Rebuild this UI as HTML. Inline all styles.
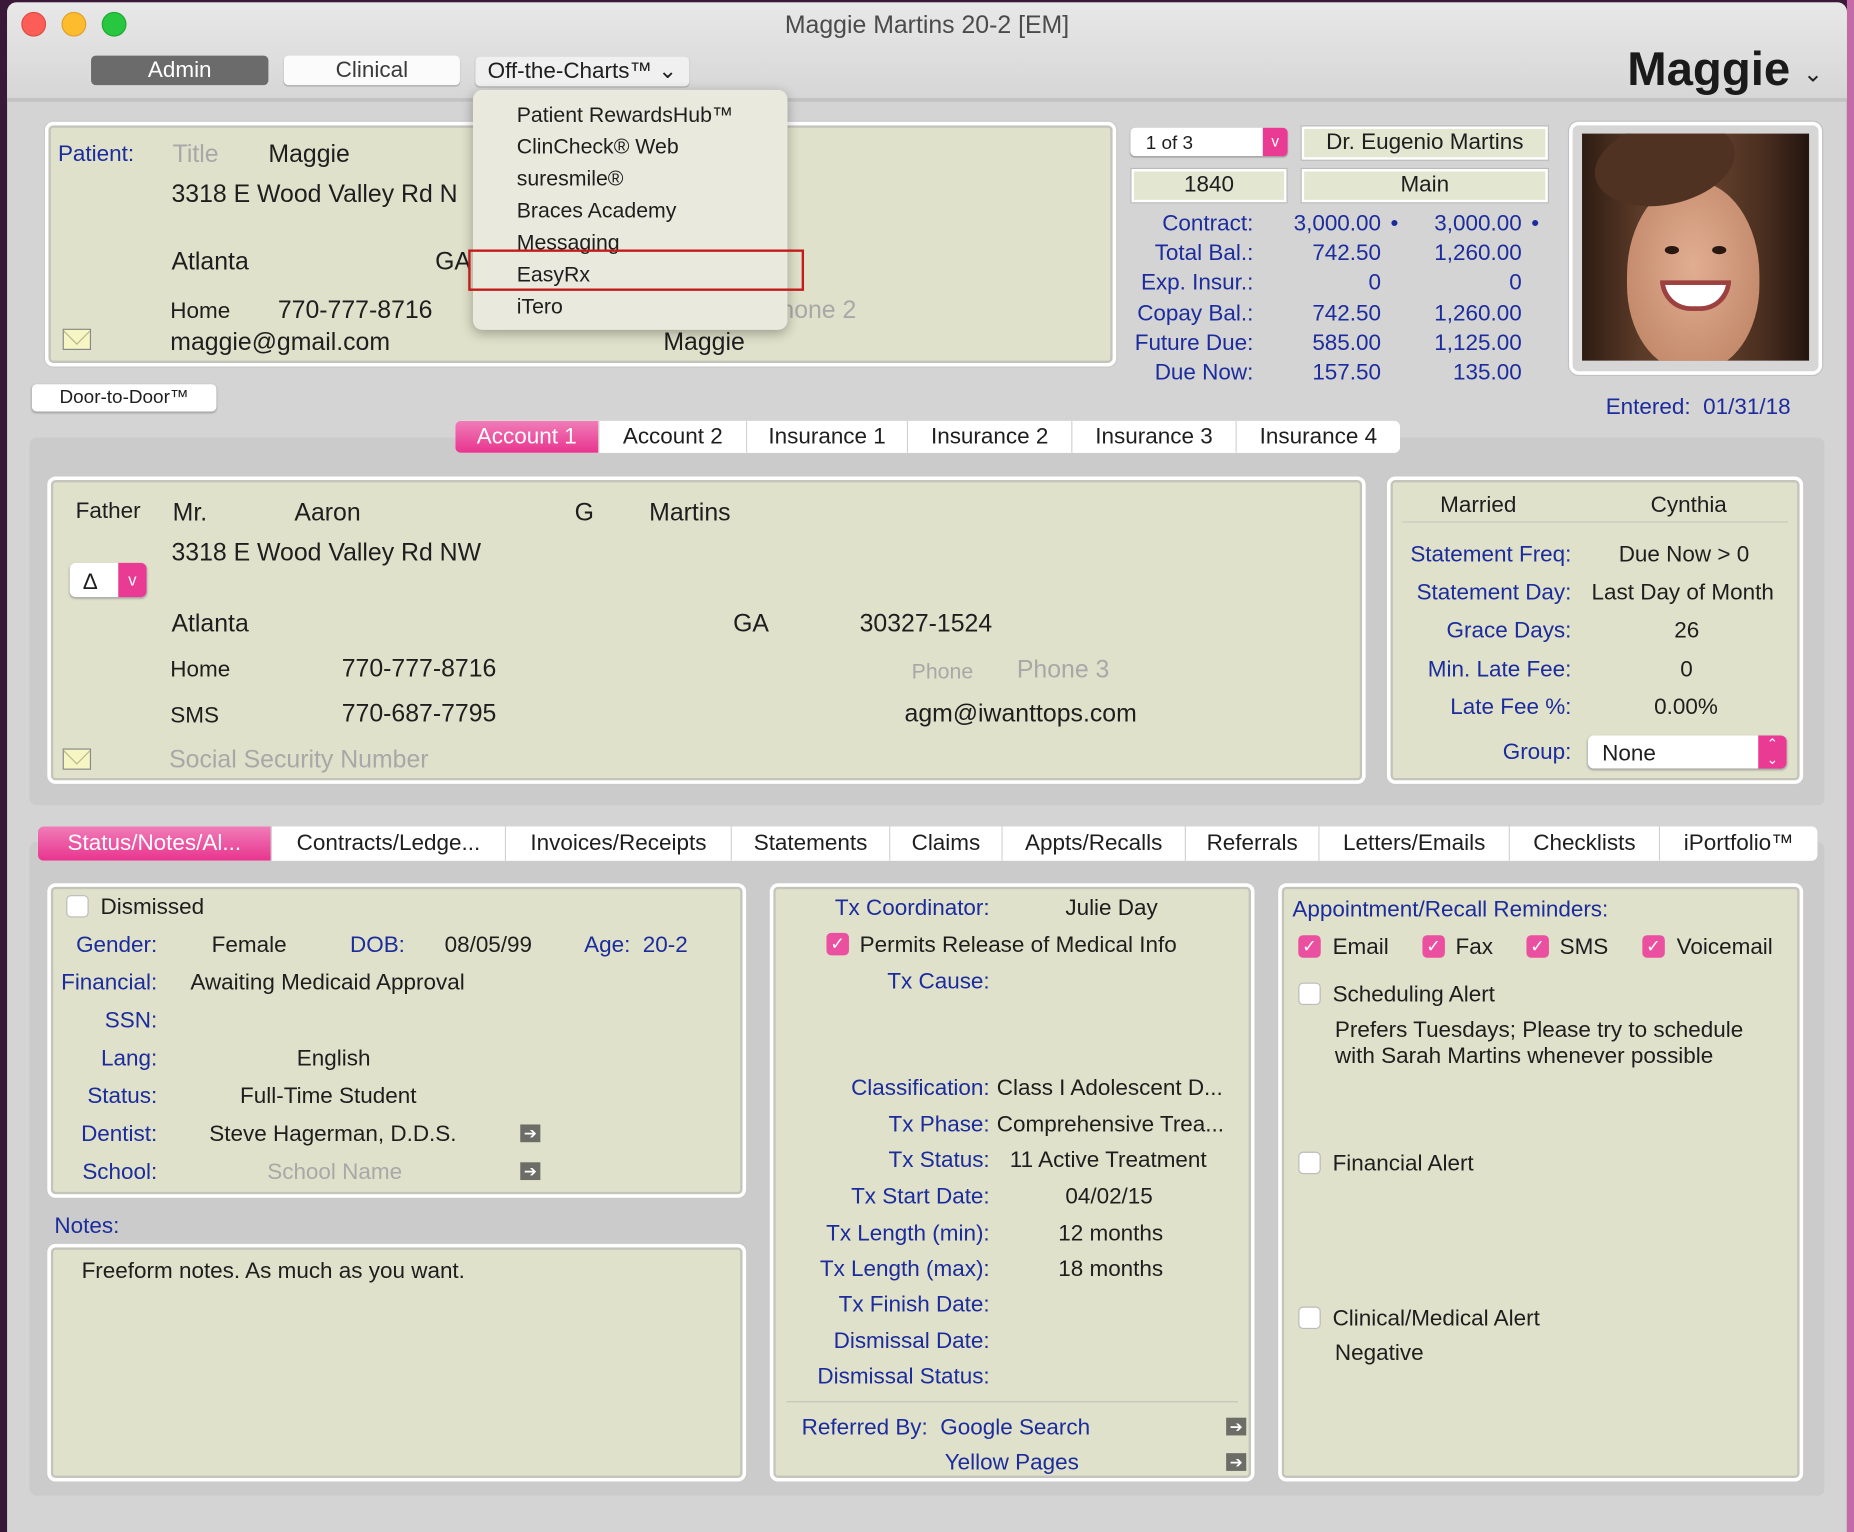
<!DOCTYPE html>
<html><head><meta charset="utf-8"><style>
*{margin:0;padding:0;box-sizing:border-box}
body{width:1854px;height:1532px;overflow:hidden;background:#3a1838;font-family:"Liberation Sans",Arial,sans-serif}
#s{position:absolute;left:0;top:0;width:1568px;height:1296px;transform:scale(1.18240);transform-origin:0 0}
.a{position:absolute}
.t{position:absolute;white-space:nowrap;line-height:1;font-size:19px;color:#1e1e1e;margin-top:1px}
.r{transform:translateX(-100%)}
.c{transform:translateX(-50%)}
.b{color:#1c2c9c}
.g{color:#a8a8a8}
.pn{position:absolute;background:#dfe1ca;border:3px solid #fff;border-radius:7px;box-shadow:inset 0 0 0 2px #c4c4bc,0 0 0 1px #c9c9c9}
.tab{position:absolute;top:0;height:100%;background:#fff;border-right:1px solid #d0d0d0;text-align:center;font-size:19px;color:#1e1e1e;line-height:27px}
.pk{background:linear-gradient(#f07cb8,#e8348e);color:#fff}
.cb{position:absolute;width:19px;height:19px;border-radius:4px;background:#ea4fa0;color:#fff;font-size:15px;line-height:19px;text-align:center}
.ce{position:absolute;width:19px;height:19px;border-radius:4px;background:#fff;border:1px solid #bbb}
.ar{position:absolute;width:17px;height:15px;background:#6d6d68;color:#fff;font-size:13px;line-height:15px;text-align:center}
.env{position:absolute;width:24px;height:18px;background:#f6f5c4;border:1px solid #888;overflow:hidden}
.env:after{content:"";position:absolute;left:2px;top:-9px;width:16px;height:16px;border:1px solid #b8b890;transform:rotate(45deg)}
.bx{position:absolute;background:#e3e6d0;border:2px solid #fff;box-shadow:0 0 0 1px #bbb;text-align:center;font-size:19px;line-height:24px;color:#1e1e1e}
</style></head><body>
<div id="s">
<div class="a" style="left:6px;top:2px;width:1556px;height:1294px;background:#d4d4d4;border-radius:8px 8px 0 0"></div>
<div class="a" style="left:1562px;top:0;width:6px;height:1296px;background:#c46aa6"></div>
<div class="a" style="left:6px;top:2px;width:1556px;height:82px;background:linear-gradient(#e8e8e8,#d6d6d6);border-radius:8px 8px 0 0"></div>
<div class="a" style="left:6px;top:83px;width:1556px;height:3px;background:#c2c2c2"></div>
<div class="a" style="left:18px;top:10px;width:21px;height:21px;border-radius:50%;background:#fc5e57;border:1px solid #dd4a44"></div>
<div class="a" style="left:52px;top:10px;width:21px;height:21px;border-radius:50%;background:#fdbb2e;border:1px solid #dea02a"></div>
<div class="a" style="left:86px;top:10px;width:21px;height:21px;border-radius:50%;background:#27c73f;border:1px solid #1fa731"></div>
<div class="t c" style="left:784px;top:10px;font-size:21px;color:#4b4b4b">Maggie Martins 20-2 [EM]</div>
<div class="a" style="left:77px;top:47px;width:150px;height:25px;background:#6b6b6b;border-radius:4px;color:#fff;font-size:19px;text-align:center;line-height:25px">Admin</div>
<div class="a" style="left:240px;top:47px;width:149px;height:25px;background:#fbfbfb;border-radius:4px;color:#3a3a3a;font-size:19px;text-align:center;line-height:25px;box-shadow:0 1px 1px #aaa">Clinical</div>
<div class="a" style="left:402px;top:48px;width:181px;height:25px;background:#f0f0f0;border-radius:4px;color:#1e1e1e;font-size:19px;text-align:center;line-height:25px;box-shadow:0 1px 1px #aaa">Off-the-Charts™ ⌄</div>
<div class="t r" style="left:1514px;top:38px;font-size:40px;font-weight:bold;color:#1a1a1a">Maggie</div>
<div class="t" style="left:1525px;top:52px;font-size:20px;color:#222">⌄</div>
<div class="pn" style="left:38px;top:103px;width:906px;height:207px"></div>
<div class="t b" style="left:49px;top:120px">Patient:</div>
<div class="t g" style="left:146px;top:119px;font-size:21px">Title</div>
<div class="t" style="left:227px;top:119px;font-size:21px">Maggie</div>
<div class="t" style="left:145px;top:153px;font-size:21px">3318 E Wood Valley Rd N</div>
<div class="t" style="left:145px;top:210px;font-size:21px">Atlanta</div>
<div class="t" style="left:368px;top:210px;font-size:21px">GA</div>
<div class="t" style="left:144px;top:253px">Home</div>
<div class="t" style="left:235px;top:251px;font-size:21px">770-777-8716</div>
<div class="t g" style="left:660px;top:251px;font-size:21px">hone 2</div>
<div class="env" style="left:53px;top:278px"></div>
<div class="t" style="left:144px;top:278px;font-size:21px">maggie@gmail.com</div>
<div class="t" style="left:561px;top:278px;font-size:21px">Maggie</div>
<div class="a" style="left:400px;top:76px;width:266px;height:203px;background:#e9eadd;border-radius:8px;box-shadow:0 3px 10px rgba(0,0,0,.3)"></div>
<div class="t" style="left:437px;top:87px;font-size:18px">Patient RewardsHub™</div>
<div class="t" style="left:437px;top:114px;font-size:18px">ClinCheck® Web</div>
<div class="t" style="left:437px;top:141px;font-size:18px">suresmile®</div>
<div class="t" style="left:437px;top:168px;font-size:18px">Braces Academy</div>
<div class="t" style="left:437px;top:195px;font-size:18px">Messaging</div>
<div class="t" style="left:437px;top:222px;font-size:18px">EasyRx</div>
<div class="t" style="left:437px;top:249px;font-size:18px">iTero</div>
<div class="a" style="left:396px;top:211px;width:284px;height:35px;border:2px solid #c41a1a"></div>
<div class="a" style="left:956px;top:108px;width:133px;height:24px;background:#fff;border-radius:4px;box-shadow:0 1px 1px #999"></div>
<div class="t" style="left:969px;top:113px;font-size:16px">1 of 3</div>
<div class="a" style="left:1068px;top:108px;width:21px;height:24px;background:#ea3b94;border-radius:0 4px 4px 0;color:#fff;font-size:13px;text-align:center;line-height:24px">v</div>
<div class="bx" style="left:1101px;top:107px;width:208px;height:28px">Dr. Eugenio Martins</div>
<div class="bx" style="left:957px;top:143px;width:131px;height:28px">1840</div>
<div class="bx" style="left:1101px;top:143px;width:208px;height:28px">Main</div>
<div class="t b r" style="left:1060px;top:179px">Contract:</div><div class="t b r" style="left:1168px;top:179px">3,000.00</div><div class="t b" style="left:1176px;top:179px">•</div><div class="t b r" style="left:1287px;top:179px">3,000.00</div><div class="t b" style="left:1295px;top:179px">•</div>
<div class="t b r" style="left:1060px;top:204px">Total Bal.:</div><div class="t b r" style="left:1168px;top:204px">742.50</div><div class="t b r" style="left:1287px;top:204px">1,260.00</div>
<div class="t b r" style="left:1060px;top:229px">Exp. Insur.:</div><div class="t b r" style="left:1168px;top:229px">0</div><div class="t b r" style="left:1287px;top:229px">0</div>
<div class="t b r" style="left:1060px;top:255px">Copay Bal.:</div><div class="t b r" style="left:1168px;top:255px">742.50</div><div class="t b r" style="left:1287px;top:255px">1,260.00</div>
<div class="t b r" style="left:1060px;top:280px">Future Due:</div><div class="t b r" style="left:1168px;top:280px">585.00</div><div class="t b r" style="left:1287px;top:280px">1,125.00</div>
<div class="t b r" style="left:1060px;top:305px">Due Now:</div><div class="t b r" style="left:1168px;top:305px">157.50</div><div class="t b r" style="left:1287px;top:305px">135.00</div>
<div class="a" style="left:1327px;top:103px;width:214px;height:214px;background:#d6d6d6;border:3px solid #fff;border-radius:8px;box-shadow:0 0 0 1px #c0c0c0"></div>
<div class="a" style="left:1338px;top:113px;width:192px;height:192px;overflow:hidden;background:linear-gradient(90deg,#2e1c12,#5a3a28 25%,#6b4631 50%,#4a2e1f 80%,#231510)">
<div class="a" style="left:38px;top:40px;width:112px;height:160px;border-radius:50% 50% 45% 45%;background:radial-gradient(ellipse at 50% 45%,#e1ae92,#c48a6c 75%)"></div>
<div class="a" style="left:10px;top:-10px;width:120px;height:70px;border-radius:50%;background:#4f3222;transform:rotate(-12deg)"></div>
<div class="a" style="left:66px;top:124px;width:60px;height:26px;border-radius:0 0 30px 30px;background:#fff;border:4px solid #9c4040"></div>
<div class="a" style="left:70px;top:95px;width:12px;height:7px;border-radius:50%;background:#2a1810"></div>
<div class="a" style="left:110px;top:95px;width:12px;height:7px;border-radius:50%;background:#2a1810"></div>
</div>
<div class="t b" style="left:1358px;top:334px">Entered:&nbsp; 01/31/18</div>
<div class="a" style="left:27px;top:325px;width:156px;height:23px;background:#fff;border-radius:4px;box-shadow:0 1px 2px #999;font-size:16px;text-align:center;line-height:23px;color:#1e1e1e">Door-to-Door™</div>
<div class="a" style="left:25px;top:370px;width:1518px;height:311px;background:#cbcbcb;border-radius:6px"></div>
<div class="a" style="left:385px;top:356px;width:799px;height:27px;background:#fff;border-radius:5px;overflow:hidden">
<div class="tab pk" style="left:0;width:122px">Account 1</div>
<div class="tab" style="left:122px;width:125px">Account 2</div>
<div class="tab" style="left:247px;width:136px">Insurance 1</div>
<div class="tab" style="left:383px;width:139px">Insurance 2</div>
<div class="tab" style="left:522px;width:139px">Insurance 3</div>
<div class="tab" style="left:661px;width:138px;border:none">Insurance 4</div>
</div>
<div class="pn" style="left:40px;top:403px;width:1115px;height:260px"></div>
<div class="t" style="left:64px;top:422px">Father</div>
<div class="t" style="left:146px;top:422px;font-size:21px">Mr.</div>
<div class="t" style="left:249px;top:422px;font-size:21px">Aaron</div>
<div class="t" style="left:486px;top:422px;font-size:21px">G</div>
<div class="t" style="left:549px;top:422px;font-size:21px">Martins</div>
<div class="t" style="left:145px;top:456px;font-size:21px">3318 E Wood Valley Rd NW</div>
<div class="a" style="left:59px;top:476px;width:65px;height:29px;background:#fff;border-radius:5px;box-shadow:0 1px 2px #999"></div>
<div class="t" style="left:70px;top:482px">Δ</div>
<div class="a" style="left:100px;top:476px;width:24px;height:29px;background:#ea3b94;border-radius:0 5px 5px 0;color:#fff;font-size:14px;text-align:center;line-height:29px">v</div>
<div class="t" style="left:145px;top:516px;font-size:21px">Atlanta</div>
<div class="t" style="left:620px;top:516px;font-size:21px">GA</div>
<div class="t" style="left:727px;top:516px;font-size:21px">30327-1524</div>
<div class="t" style="left:144px;top:556px">Home</div>
<div class="t" style="left:289px;top:554px;font-size:21px">770-777-8716</div>
<div class="t g" style="left:771px;top:558px;font-size:18px">Phone</div>
<div class="t g" style="left:860px;top:555px;font-size:21px">Phone 3</div>
<div class="t" style="left:144px;top:595px">SMS</div>
<div class="t" style="left:289px;top:592px;font-size:21px">770-687-7795</div>
<div class="t" style="left:765px;top:592px;font-size:21px">agm@iwanttops.com</div>
<div class="env" style="left:53px;top:633px"></div>
<div class="t g" style="left:143px;top:631px;font-size:21px">Social Security Number</div>
<div class="pn" style="left:1173px;top:403px;width:352px;height:260px"></div>
<div class="a" style="left:1186px;top:441px;width:326px;height:1px;background:#c8c8c0"></div>
<div class="t" style="left:1218px;top:417px">Married</div>
<div class="t" style="left:1396px;top:417px">Cynthia</div>
<div class="t b r" style="left:1329px;top:459px">Statement Freq:</div><div class="t" style="left:1369px;top:459px">Due Now &gt; 0</div>
<div class="t b r" style="left:1329px;top:491px">Statement Day:</div><div class="t" style="left:1346px;top:491px">Last Day of Month</div>
<div class="t b r" style="left:1329px;top:523px">Grace Days:</div><div class="t" style="left:1416px;top:523px">26</div>
<div class="t b r" style="left:1329px;top:556px">Min. Late Fee:</div><div class="t" style="left:1421px;top:556px">0</div>
<div class="t b r" style="left:1329px;top:588px">Late Fee %:</div><div class="t" style="left:1399px;top:588px">0.00%</div>
<div class="t b r" style="left:1329px;top:626px">Group:</div>
<div class="a" style="left:1343px;top:622px;width:168px;height:28px;background:#fff;border-radius:5px;box-shadow:0 1px 2px #999"></div>
<div class="t" style="left:1355px;top:627px">None</div>
<div class="a" style="left:1487px;top:622px;width:24px;height:28px;background:#ea3b94;border-radius:0 5px 5px 0;color:#fff;font-size:12px;text-align:center;line-height:13px;padding-top:1px">⌃<br>⌄</div>
<div class="a" style="left:25px;top:712px;width:1518px;height:553px;background:#cbcbcb;border-radius:6px"></div>
<div class="a" style="left:32px;top:699px;width:1505px;height:29px;background:#fff;border-radius:5px;overflow:hidden">
<div class="tab pk" style="left:0;width:198px;line-height:29px">Status/Notes/Al...</div>
<div class="tab" style="left:198px;width:198px;line-height:29px">Contracts/Ledge...</div>
<div class="tab" style="left:396px;width:191px;line-height:29px">Invoices/Receipts</div>
<div class="tab" style="left:587px;width:134px;line-height:29px">Statements</div>
<div class="tab" style="left:721px;width:95px;line-height:29px">Claims</div>
<div class="tab" style="left:816px;width:155px;line-height:29px">Appts/Recalls</div>
<div class="tab" style="left:971px;width:113px;line-height:29px">Referrals</div>
<div class="tab" style="left:1084px;width:161px;line-height:29px">Letters/Emails</div>
<div class="tab" style="left:1245px;width:127px;line-height:29px">Checklists</div>
<div class="tab" style="left:1372px;width:133px;line-height:29px;border:none">iPortfolio™</div>
</div>
<div class="pn" style="left:40px;top:747px;width:591px;height:266px"></div>
<div class="ce" style="left:56px;top:757px"></div><div class="t" style="left:85px;top:757px">Dismissed</div>
<div class="t b r" style="left:133px;top:789px">Gender:</div><div class="t" style="left:179px;top:789px">Female</div>
<div class="t b" style="left:296px;top:789px">DOB:</div><div class="t" style="left:376px;top:789px">08/05/99</div>
<div class="t b" style="left:494px;top:789px">Age:&nbsp; 20-2</div>
<div class="t b r" style="left:133px;top:821px">Financial:</div><div class="t" style="left:161px;top:821px">Awaiting Medicaid Approval</div>
<div class="t b r" style="left:133px;top:853px">SSN:</div>
<div class="t b r" style="left:133px;top:885px">Lang:</div><div class="t" style="left:251px;top:885px">English</div>
<div class="t b r" style="left:133px;top:917px">Status:</div><div class="t" style="left:203px;top:917px">Full-Time Student</div>
<div class="t b r" style="left:133px;top:949px">Dentist:</div><div class="t" style="left:177px;top:949px">Steve Hagerman, D.D.S.</div>
<div class="ar" style="left:440px;top:951px">➔</div>
<div class="t b r" style="left:133px;top:981px">School:</div><div class="t g" style="left:226px;top:981px">School Name</div>
<div class="ar" style="left:440px;top:983px">➔</div>
<div class="t b" style="left:46px;top:1027px">Notes:</div>
<div class="pn" style="left:40px;top:1052px;width:591px;height:201px"></div>
<div class="t" style="left:69px;top:1065px">Freeform notes. As much as you want.</div>
<div class="pn" style="left:651px;top:747px;width:410px;height:506px"></div>
<div class="t b r" style="left:837px;top:758px">Tx Coordinator:</div><div class="t" style="left:901px;top:758px">Julie Day</div>
<div class="cb" style="left:699px;top:789px">✓</div><div class="t" style="left:727px;top:789px">Permits Release of Medical Info</div>
<div class="t b r" style="left:837px;top:820px">Tx Cause:</div>
<div class="t b r" style="left:837px;top:910px">Classification:</div><div class="t" style="left:843px;top:910px">Class I Adolescent D...</div>
<div class="t b r" style="left:837px;top:941px">Tx Phase:</div><div class="t" style="left:843px;top:941px">Comprehensive Trea...</div>
<div class="t b r" style="left:837px;top:971px">Tx Status:</div><div class="t" style="left:854px;top:971px">11 Active Treatment</div>
<div class="t b r" style="left:837px;top:1002px">Tx Start Date:</div><div class="t" style="left:901px;top:1002px">04/02/15</div>
<div class="t b r" style="left:837px;top:1033px">Tx Length (min):</div><div class="t" style="left:895px;top:1033px">12 months</div>
<div class="t b r" style="left:837px;top:1063px">Tx Length (max):</div><div class="t" style="left:895px;top:1063px">18 months</div>
<div class="t b r" style="left:837px;top:1093px">Tx Finish Date:</div>
<div class="t b r" style="left:837px;top:1124px">Dismissal Date:</div>
<div class="t b r" style="left:837px;top:1154px">Dismissal Status:</div>
<div class="a" style="left:665px;top:1185px;width:382px;height:1px;background:#c4c4bc"></div>
<div class="t b" style="left:678px;top:1197px">Referred By:&nbsp; Google Search</div>
<div class="ar" style="left:1037px;top:1199px">➔</div>
<div class="t b" style="left:799px;top:1227px">Yellow Pages</div>
<div class="ar" style="left:1037px;top:1229px">➔</div>
<div class="pn" style="left:1081px;top:747px;width:444px;height:506px"></div>
<div class="t b" style="left:1093px;top:759px">Appointment/Recall Reminders:</div>
<div class="cb" style="left:1098px;top:791px">✓</div><div class="t" style="left:1127px;top:791px">Email</div>
<div class="cb" style="left:1203px;top:791px">✓</div><div class="t" style="left:1231px;top:791px">Fax</div>
<div class="cb" style="left:1291px;top:791px">✓</div><div class="t" style="left:1319px;top:791px">SMS</div>
<div class="cb" style="left:1389px;top:791px">✓</div><div class="t" style="left:1418px;top:791px">Voicemail</div>
<div class="ce" style="left:1098px;top:831px"></div><div class="t" style="left:1127px;top:831px">Scheduling Alert</div>
<div class="t" style="left:1129px;top:861px">Prefers Tuesdays; Please try to schedule</div>
<div class="t" style="left:1129px;top:883px">with Sarah Martins whenever possible</div>
<div class="ce" style="left:1098px;top:974px"></div><div class="t" style="left:1127px;top:974px">Financial Alert</div>
<div class="ce" style="left:1098px;top:1105px"></div><div class="t" style="left:1127px;top:1105px">Clinical/Medical Alert</div>
<div class="t" style="left:1129px;top:1134px">Negative</div>
</div>
</body></html>
